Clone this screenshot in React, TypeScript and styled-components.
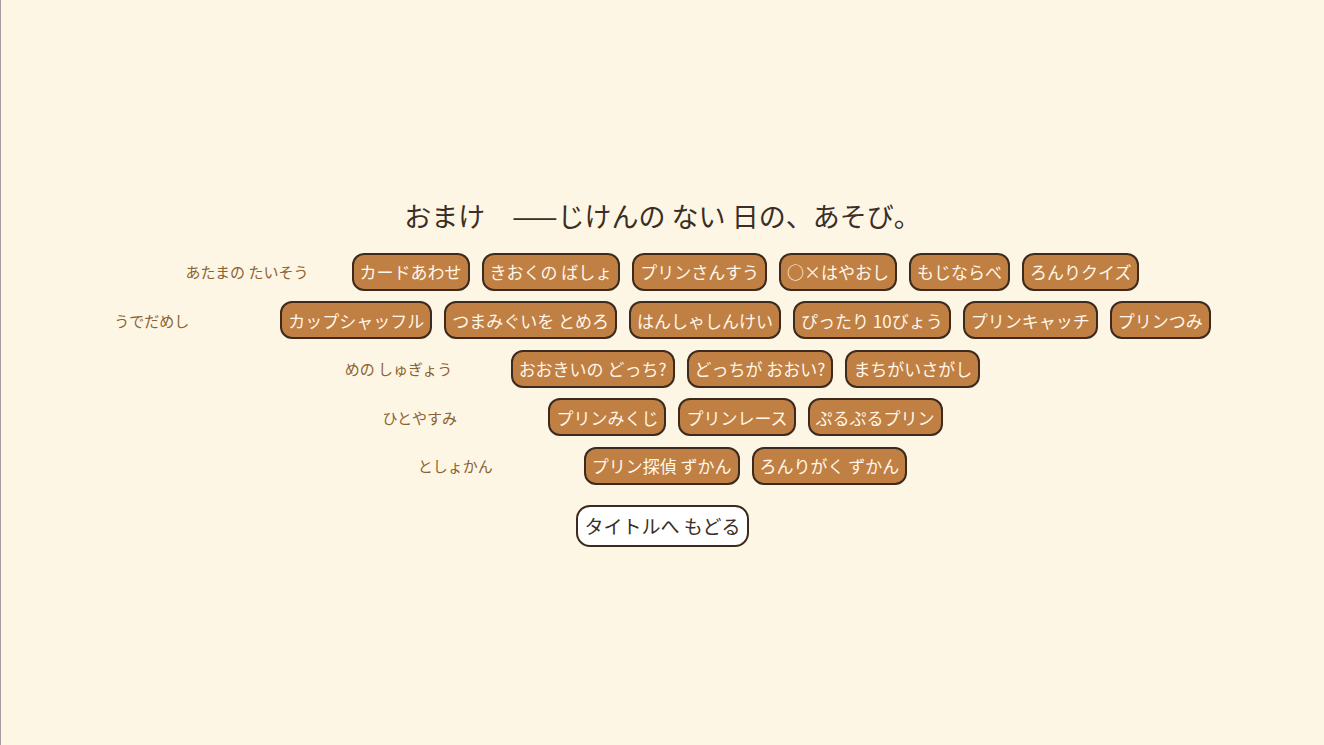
import React from "react";
import styled, { createGlobalStyle } from "styled-components";

const GlobalStyle = createGlobalStyle`
  html, body {
    margin: 0;
    padding: 0;
    background: #fef6e5;
  }
  body {
    font-family: "Noto Sans CJK JP", "Noto Sans", sans-serif;
    border-left: 1px solid #a89a9e;
  }
  * {
    box-sizing: border-box;
  }
`;

const Screen = styled.div`
  min-height: 100vh;
  display: flex;
  flex-direction: column;
  align-items: center;
  justify-content: center;
`;

const Title = styled.h1`
  margin: 0 0 20px;
  font-size: 27px;
  line-height: 34px;
  font-weight: 400;
  color: #3a2e25;
  white-space: pre;
`;

const Rows = styled.div`
  display: flex;
  flex-direction: column;
  align-items: center;
  gap: 10.5px;
`;

const Row = styled.div`
  display: flex;
  align-items: center;
  gap: 12px;
`;

const Label = styled.span`
  width: 154px;
  font-size: 15px;
  color: #8b6232;
  white-space: pre;
`;

const GameButton = styled.button`
  height: 38px;
  padding: 0 6px;
  border: 2px solid #3b2a1d;
  border-radius: 12px;
  background: #c07f43;
  color: #fff7ea;
  font-family: inherit;
  font-size: 17px;
  font-weight: 400;
  white-space: pre;
  cursor: pointer;
`;

const BackButton = styled.button`
  margin-top: 20px;
  height: 42px;
  padding: 0 7px;
  border: 2px solid #3b2a1d;
  border-radius: 14px;
  background: #ffffff;
  color: #3a2e25;
  font-family: inherit;
  font-size: 19px;
  font-weight: 400;
  white-space: pre;
  cursor: pointer;
`;

type Group = { label: string; games: string[] };

const groups: Group[] = [
  {
    label: "あたまの たいそう",
    games: ["カードあわせ", "きおくの ばしょ", "プリンさんすう", "○×はやおし", "もじならべ", "ろんりクイズ"],
  },
  {
    label: "うでだめし",
    games: ["カップシャッフル", "つまみぐいを とめろ", "はんしゃしんけい", "ぴったり 10びょう", "プリンキャッチ", "プリンつみ"],
  },
  {
    label: "めの しゅぎょう",
    games: ["おおきいの どっち?", "どっちが おおい?", "まちがいさがし"],
  },
  {
    label: "ひとやすみ",
    games: ["プリンみくじ", "プリンレース", "ぷるぷるプリン"],
  },
  {
    label: "としょかん",
    games: ["プリン探偵 ずかん", "ろんりがく ずかん"],
  },
];

export default function App() {
  return (
    <>
      <GlobalStyle />
      <Screen>
        <Title>おまけ　——じけんの ない 日の、あそび。</Title>
        <Rows>
          {groups.map((g) => (
            <Row key={g.label}>
              <Label>{g.label}</Label>
              {g.games.map((name) => (
                <GameButton key={name}>{name}</GameButton>
              ))}
            </Row>
          ))}
        </Rows>
        <BackButton>タイトルへ もどる</BackButton>
      </Screen>
    </>
  );
}
